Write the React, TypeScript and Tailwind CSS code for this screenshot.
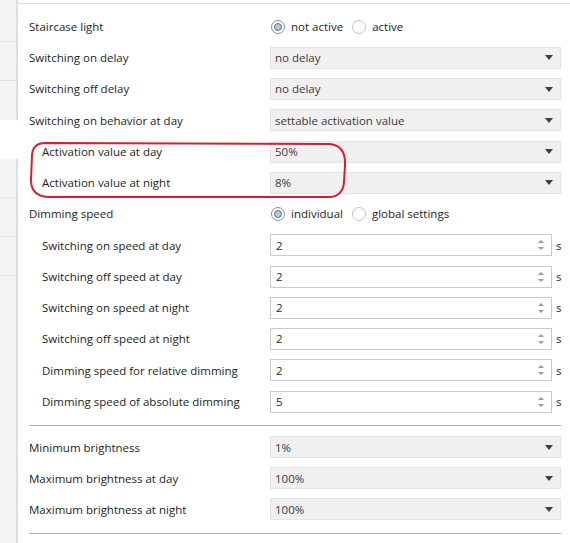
import React from 'react'

type Row =
  | { kind: 'radio'; label: string; options: [string, string]; indent?: boolean }
  | { kind: 'select'; label: string; value: string; indent?: boolean }
  | { kind: 'number'; label: string; value: string; indent?: boolean }

const speedRows: Row[] = [
  { kind: 'radio', label: 'Staircase light', options: ['not active', 'active'] },
  { kind: 'select', label: 'Switching on delay', value: 'no delay' },
  { kind: 'select', label: 'Switching off delay', value: 'no delay' },
  { kind: 'select', label: 'Switching on behavior at day', value: 'settable activation value' },
  { kind: 'select', label: 'Activation value at day', value: '50%', indent: true },
  { kind: 'select', label: 'Activation value at night', value: '8%', indent: true },
  { kind: 'radio', label: 'Dimming speed', options: ['individual', 'global settings'] },
  { kind: 'number', label: 'Switching on speed at day', value: '2', indent: true },
  { kind: 'number', label: 'Switching off speed at day', value: '2', indent: true },
  { kind: 'number', label: 'Switching on speed at night', value: '2', indent: true },
  { kind: 'number', label: 'Switching off speed at night', value: '2', indent: true },
  { kind: 'number', label: 'Dimming speed for relative dimming', value: '2', indent: true },
  { kind: 'number', label: 'Dimming speed of absolute dimming', value: '5', indent: true },
]

const brightnessRows: Row[] = [
  { kind: 'select', label: 'Minimum brightness', value: '1%' },
  { kind: 'select', label: 'Maximum brightness at day', value: '100%' },
  { kind: 'select', label: 'Maximum brightness at night', value: '100%' },
]

function Radio({ checked, label }: { checked?: boolean; label: string }) {
  return (
    <div className="flex items-center">
      {checked ? (
        <span className="flex h-[14px] w-[14px] items-center justify-center rounded-full border border-[#8e8e8e] bg-white">
          <span className="h-[8px] w-[8px] rounded-full border border-[#58738f] bg-[#b6c7d8]" />
        </span>
      ) : (
        <span className="h-[14px] w-[14px] rounded-full border border-[#c4c4c4] bg-white" />
      )}
      <span className="ml-[6px] text-[#1e1e1e]">{label}</span>
    </div>
  )
}

function Control({ row }: { row: Row }) {
  if (row.kind === 'radio') {
    return (
      <div className="flex items-center gap-[9px] pl-[1px]">
        <Radio checked label={row.options[0]} />
        <Radio label={row.options[1]} />
      </div>
    )
  }
  if (row.kind === 'select') {
    return (
      <div className="flex h-[22px] items-center justify-between border border-[#e4e4e4] bg-[#f0f0f0] pl-[4px] pr-[7px] text-[#3a3a3a]">
        <span>{row.value}</span>
        <svg width="8" height="5" viewBox="0 0 8 5">
          <path d="M0 0 H8 L4 5 Z" fill="#3f3f3f" />
        </svg>
      </div>
    )
  }
  return (
    <div className="flex items-center">
      <div className="flex h-[22px] w-[282px] items-center justify-between border border-[#cacaca] bg-white pl-[5px] pr-[7px] text-[#2a2a2a]">
        <span>{row.value}</span>
        <svg width="6" height="12" viewBox="0 0 6 12">
          <path d="M0 4 L3 1 L6 4 Z" fill="#9a9a9a" />
          <path d="M0 8 L3 11 L6 8 Z" fill="#9a9a9a" />
        </svg>
      </div>
      <span className="ml-[4px] text-[#2a2a2a]">s</span>
    </div>
  )
}

function ParamRow({ row, h }: { row: Row; h: string }) {
  return (
    <div className={`flex items-center ${h}`}>
      <div className={row.indent ? 'w-[252px] shrink-0 pl-[24px] text-[#1e1e1e]' : 'w-[252px] shrink-0 pl-[11px] text-[#1e1e1e]'}>
        {row.label}
      </div>
      <div className="flex-1">
        <Control row={row} />
      </div>
    </div>
  )
}

function SideStrip() {
  return (
    <div className="flex w-[18px] shrink-0 flex-col">
      <div className="flex h-[120px] flex-col border-r-2 border-[#dedede] bg-[#f3f3f3]">
        <div className="h-[42px] border-b border-[#e2e2e2]" />
        <div className="h-[39px] border-b border-[#e2e2e2]" />
        <div className="flex-1" />
      </div>
      <div className="h-[39px] bg-white" />
      <div className="flex flex-1 flex-col border-r-2 border-[#dedede] bg-[#f3f3f3]">
        <div className="h-[39px] border-b border-[#e2e2e2]" />
        <div className="h-[39px] border-b border-[#e2e2e2]" />
        <div className="h-[39px] border-b border-[#e2e2e2]" />
        <div className="flex-1" />
      </div>
    </div>
  )
}

export default function App() {
  return (
    <div
      className="relative flex h-[543px] w-[570px] overflow-hidden bg-white text-[11.5px] leading-none"
      style={{ fontFamily: '"Segoe UI", "Open Sans", sans-serif' }}
    >
      <SideStrip />
      <div className="flex-1 pt-[3px]">
        <div className="border-t border-[#dcdcdc] pr-[9px] pt-[7px]">
          {speedRows.map((row) => (
            <ParamRow key={row.label} row={row} h="h-[31.25px]" />
          ))}
          <div className="ml-[11px] mt-[8px] border-t border-[#b0b0b0]" />
          <div className="pt-[5.5px]">
            {brightnessRows.map((row) => (
              <ParamRow key={row.label} row={row} h="h-[31px]" />
            ))}
          </div>
          <div className="ml-[11px] mt-[8.5px] border-t border-[#b0b0b0]" />
        </div>
      </div>

      {/* hand-drawn highlight */}
      <svg className="pointer-events-none absolute left-0 top-0" width="570" height="543">
        <path
          d="M45 143 L330 144 Q346 146 345 165 L344 182 Q343 196 330 197 L48 197 Q31 196 31 180 L32 155 Q33 143 45 143 Z"
          fill="none"
          stroke="#d3202f"
          strokeWidth="2"
        />
      </svg>
    </div>
  )
}
